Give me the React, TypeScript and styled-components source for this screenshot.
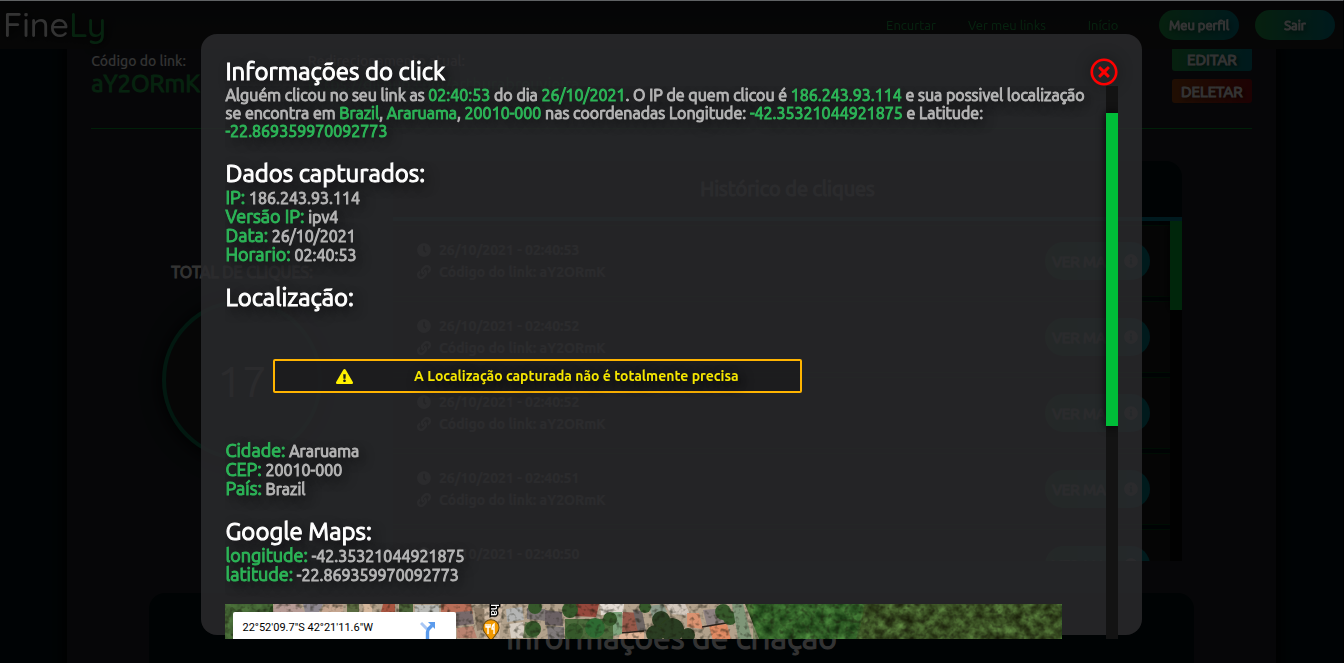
import React from "react";
import styled, { createGlobalStyle, css } from "styled-components";
import {
  FaClock,
  FaLink,
  FaInfoCircle,
  FaExclamationTriangle,
  FaRegTimesCircle,
} from "react-icons/fa";

const GlobalStyle = createGlobalStyle`
  * { box-sizing: border-box; margin: 0; padding: 0; }
  body {
    background: #000;
    color: #fff;
    font-family: Ubuntu, Lato, "Noto Sans", sans-serif;
    font-size: 16px;
  }
  button { font-family: inherit; border: 0; cursor: pointer; }
  a { text-decoration: none; }
`;

const brandGradient = "linear-gradient(90deg, #22a04a, #00808f)";

const strongText = css`
  font-weight: 400;
  -webkit-text-stroke: 1px currentColor;
`;

const Page = styled.div`
  height: 100vh;
  padding-right: 1px;
  overflow: hidden;
  background: #00121a;
`;

/* ---------- top bar ---------- */

const TopBar = styled.header`
  position: sticky;
  top: 0;
  z-index: 1;
  display: flex;
  align-items: center;
  justify-content: space-between;
  height: 49px;
  padding: 0 8px 0 3px;
  background: linear-gradient(#191b1e, #222);
`;

const Logo = styled.a`
  font-family: Quicksand, Comfortaa, Lato, sans-serif;
  font-size: 34px;
  font-weight: 500;
  line-height: 44px;
  color: #fff;
  text-shadow: 2px 2px 8px #000;
`;

const LogoAccent = styled.span`
  color: #22b14c;
`;

const Nav = styled.nav`
  display: flex;
  align-items: center;
  gap: 16px;
`;

const NavLink = styled.a`
  width: 80px;
  font-size: 13px;
  line-height: 18px;
  text-align: center;
  white-space: nowrap;
  color: #1fb04c;
`;

const NavButton = styled.button`
  ${strongText}
  width: 80px;
  height: 30px;
  border-radius: 15px;
  font-size: 13px;
  color: #fff;
  background: ${brandGradient};
  text-shadow: 2px 2px 6px #000;
`;

/* ---------- page content ---------- */

const Main = styled.main`
  width: 90%;
  margin: -2px auto 0;
  padding: 0 24px;
  min-height: 100vh;
  background: #1e2228;
  box-shadow: 0 0 12px 4px #000;
`;

const LinkHeader = styled.section`
  display: flex;
  gap: 108px;
  height: 82px;
  border-bottom: 1px solid #00a030;
`;

const LinkField = styled.div`
  padding-top: 5px;
  font-size: 14px;
  font-weight: 500;
  line-height: 18px;
  white-space: nowrap;
`;

const LinkCode = styled.p`
  ${strongText}
  font-size: 24px;
  line-height: 28px;
  color: #1fb04c;
`;

const LinkTarget = styled.a`
  display: block;
  font-size: 16px;
  line-height: 28px;
  color: #1fb04c;
`;

const LinkActions = styled.div`
  display: flex;
  flex-direction: column;
  gap: 8px;
  margin-left: auto;
`;

const ActionButton = styled.button<{ $danger?: boolean }>`
  ${strongText}
  width: 80px;
  height: 24px;
  border-radius: 3px;
  font-size: 15px;
  color: #fff;
  background: ${(p) => (p.$danger ? "linear-gradient(90deg, #a04a12, #960a10)" : brandGradient)};
  text-shadow: 2px 2px 4px #000;
`;

const Stats = styled.section`
  display: flex;
  margin-top: 32px;
`;

const Total = styled.div`
  display: flex;
  flex-direction: column;
  align-items: center;
  justify-content: center;
  gap: 18px;
  width: 26%;
`;

const TotalLabel = styled.h3`
  ${strongText}
  font-size: 16px;
  line-height: 20px;
`;

const TotalCircle = styled.div`
  display: flex;
  align-items: center;
  justify-content: center;
  width: 160px;
  height: 160px;
  border: 4px solid #0a7850;
  border-radius: 50%;
  background: #1f2022;
  box-shadow: 0 2px 20px #000;
  font-size: 44px;
`;

const History = styled.div`
  width: 68%;
  border-radius: 16px 16px 0 0;
  background: #000f14;
`;

const HistoryTitle = styled.h2`
  ${strongText}
  height: 56px;
  font-size: 20px;
  line-height: 56px;
  text-align: center;
`;

const HistoryBody = styled.div`
  display: flex;
  height: 344px;
  overflow: hidden;
  border-top: 4px solid #00829b;
`;

const HistoryList = styled.ul`
  flex: 1;
  display: flex;
  flex-direction: column;
  gap: 4px;
  padding-top: 4px;
  list-style: none;
`;

const HistoryItem = styled.li`
  display: flex;
  flex: none;
  align-items: center;
  justify-content: space-between;
  height: 72px;
  padding: 0 20px 0 24px;
  border: solid #004016;
  border-width: 1px 0;
  background: #1c1c1c;
`;

const HistoryLine = styled.p`
  display: flex;
  align-items: center;
  gap: 8px;
  font-size: 14px;
  font-weight: 700;
  line-height: 22px;
`;

const MoreButton = styled.button`
  ${strongText}
  display: flex;
  align-items: center;
  justify-content: space-between;
  width: 105px;
  height: 38px;
  padding: 0 12px 0 7px;
  border-radius: 19px;
  font-size: 15px;
  color: #fff;
  background: ${brandGradient};
  white-space: nowrap;
`;

const Track = styled.div<{ $top?: number; $color: string }>`
  flex: none;
  width: 12px;
  padding-top: ${(p) => p.$top ?? 0}px;
  background: ${(p) => p.$color};
`;

const Thumb = styled.div<{ $size: string }>`
  height: ${(p) => p.$size};
  background: #00bd38;
  box-shadow: 0 0 10px #000;
`;

const CreationInfo = styled.section`
  width: 90%;
  height: 320px;
  margin: 32px auto 0;
  padding-top: 24px;
  border-radius: 16px;
  background: #000f14;
  text-align: center;
`;

const CreationTitle = styled.h2`
  ${strongText}
  font-size: 32px;
  line-height: 40px;
`;

/* ---------- modal ---------- */

const Overlay = styled.div`
  position: fixed;
  inset: 0;
  z-index: 2;
  display: flex;
  align-items: flex-start;
  justify-content: center;
  padding-top: 33px;
  border-top: 1px solid #606264;
  border-right: 1px solid #000;
  background: rgba(0, 0, 0, 0.8);
`;

const Dialog = styled.div`
  display: flex;
  flex-direction: column;
  width: 70%;
  height: calc(100vh - 62px);
  padding: 0 24px;
  border-radius: 16px;
  background: rgba(42, 42, 44, 0.86);
`;

const DialogHeader = styled.header`
  display: flex;
  flex: none;
  align-items: flex-end;
  justify-content: space-between;
  height: 52px;
`;

const Heading = styled.h2`
  ${strongText}
  font-size: 24px;
  line-height: 28px;
  color: #fff;
  text-shadow: 4px 4px 12px #000;
`;

const CloseButton = styled.button`
  display: flex;
  border-radius: 50%;
  color: #f00;
  background: none;
  font-size: 28px;
  box-shadow: 0 0 16px rgba(0, 0, 0, 0.3);
`;

const DialogBody = styled.div`
  display: flex;
  flex: none;
  height: calc(100vh - 110px);
  overflow: hidden;
`;

const DialogContent = styled.div`
  flex: 1;
  overflow: hidden;
  color: #b4b4b4;
  text-shadow: 4px 4px 12px #000;
`;

const Summary = styled.p`
  ${strongText}
  padding-right: 8px;
  line-height: 18px;
`;

const Mark = styled.span`
  color: #2cb457;
  -webkit-text-stroke-color: #2cb457;
`;

const Group = styled.section`
  margin-top: 20px;
`;

const Field = styled.p`
  ${strongText}
  font-size: 18px;
  line-height: 19px;
  color: #2cb457;
`;

const FieldValue = styled.span`
  font-size: 16px;
  line-height: 16px;
  color: #b4b4b4;
  -webkit-text-stroke-color: #b4b4b4;
`;

const Notice = styled.div`
  display: flex;
  align-items: center;
  justify-content: space-evenly;
  width: 60%;
  height: 34px;
  margin: 47px 48px 48px;
  border: 2px solid #ffb400;
  border-radius: 2px;
  background: rgba(20, 20, 22, 0.5);
  font-size: 14px;
  font-weight: 700;
  color: #f5e600;
`;

const NoticeIcon = styled(FaExclamationTriangle)`
  font-size: 17px;
  color: #fff000;
`;

const MapFrame = styled.div`
  position: relative;
  width: 95%;
  height: 400px;
  margin-top: 20px;
  overflow: hidden;
  background: #34521f;
  text-shadow: none;
`;

const MapCard = styled.div`
  position: absolute;
  top: 8px;
  left: 8px;
  display: flex;
  align-items: flex-start;
  justify-content: space-between;
  width: 223px;
  height: 90px;
  padding: 9px 20px 0 9px;
  border-radius: 2px;
  background: #fff;
  color: #000;
  font-family: Roboto, sans-serif;
  font-size: 11px;
  line-height: 13px;
`;

const Satellite = () => (
  <svg width="100%" height="400" viewBox="0 0 836 400" preserveAspectRatio="xMinYMin slice" aria-hidden="true">
    <defs>
      <filter id="leaves" x="0" y="0" width="100%" height="100%" colorInterpolationFilters="sRGB">
        <feTurbulence type="fractalNoise" baseFrequency="0.1" numOctaves="3" seed="7" />
        <feColorMatrix values="0.5 0 0 0 -0.04  0.75 0 0 0 -0.02  0.4 0 0 0 -0.05  0 0 0 0 1" />
      </filter>
      <filter id="grain" x="0" y="0" width="100%" height="100%" colorInterpolationFilters="sRGB">
        <feTurbulence type="fractalNoise" baseFrequency="0.2" numOctaves="2" seed="3" />
        <feColorMatrix values="0 0 0 0 0.1  0 0 0 0 0.1  0 0 0 0 0.05  0 1.6 0 0 -0.78" />
      </filter>
      <filter id="soft">
        <feGaussianBlur stdDeviation="0.7" />
      </filter>
    </defs>
    <rect width="836" height="400" filter="url(#leaves)" />
    <g filter="url(#soft)">
      <path d="M48 0H520L536 40V80H231V8H48z" fill="#b3a28c" />
      <path d="M50 0h22l8 8H48z" fill="#b59a94" />
      <path d="M78 0h20l-4 8H80z" fill="#8e8890" />
      <path d="M100 0h18v8h-22z" fill="#c5a690" />
      <path d="M122 0h12v8h-12z" fill="#5a6a40" />
      <path d="M138 0h9v8h-9z" fill="#d4b79c" />
      <path d="M158 0h12v8h-14z" fill="#a85440" />
      <path d="M174 0h14v8h-14z" fill="#4b6338" />
      <path d="M190 1h24v7h-24z" fill="#b9bab6" />
      <path d="M216 0h30l2 10h-32z" fill="#b86e58" />
      <path d="M231 8l16-1 2 13-18 2z" fill="#77696a" />
      <path d="M232 24l16-2 4 12h-20z" fill="#b98370" />
      <path d="M249 3l10 2 1 20-8 2z" fill="#8c7a66" />
      <path d="M260 0h18l-4 36h-15z" fill="#cdb8a3" />
      <path d="M281 5l16-2 2 13-17 2z" fill="#b4b5b4" />
      <path d="M284 20l14-2 3 16h-15z" fill="#d6cdc2" />
      <path d="M302 4l18 1 2 12-20-2z" fill="#7d7675" />
      <path d="M300 18l14 2-2 14h-14z" fill="#6e7f58" />
      <path d="M320 6l17 2 1 14-18-1z" fill="#6a6163" />
      <path d="M322 22l17 1v13l-16-1z" fill="#807a7a" />
      <path d="M350 0h24l-3 13-22-1z" fill="#94473a" />
      <path d="M375 0h24l-1 9-22 2z" fill="#e2dad2" />
      <path d="M340 15h48v25h-48z" fill="#4c6a3a" />
      <path d="M398 8l19 1 2 18-22 2z" fill="#96584a" />
      <path d="M408 6l9 1 4 20-8 1z" fill="#6d6563" />
      <path d="M395 28l24-1v12h-26z" fill="#dfb497" />
      <path d="M424 2l14-2 4 8-14 8z" fill="#8a9a8a" />
      <path d="M440 0h20l6 12-20-2z" fill="#d2c7bc" />
      <path d="M462 9l12 0 4 16-16-2z" fill="#da9270" />
      <path d="M478 6l22-2 4 14-22 4z" fill="#8d8180" />
      <path d="M484 22l18-2 4 16-18 1z" fill="#e08a64" />
      <path d="M395 29l24-2M477 23l24-4" stroke="#2c201c" strokeWidth="1.4" />
      <path d="M388 8l9 0v22l-9 2z" fill="#7da37c" />
      <g fill="#35592c">
        <circle cx="310" cy="3" r="7" />
        <circle cx="345" cy="6" r="8" />
        <circle cx="349" cy="28" r="9" />
        <circle cx="308" cy="25" r="8" />
        <circle cx="385" cy="15" r="7" />
        <circle cx="420" cy="3" r="6" />
        <circle cx="498" cy="8" r="8" />
        <circle cx="505" cy="14" r="7" />
      </g>
      <circle cx="370" cy="24" r="10" fill="#2f6a30" />
      <g fill="#2c3d20">
        <circle cx="436" cy="16" r="9" />
        <circle cx="447" cy="26" r="12" />
        <circle cx="430" cy="30" r="9" />
        <circle cx="463" cy="31" r="7" />
      </g>
      <path d="M507 0h11l10 40h-14z" fill="#7f9678" />
      <path d="M0 0h46l-10 40H0z" fill="#4c6a3c" fillOpacity="0.6" />
      <path d="M528 0h110l-80 400h-30z" fill="#2f6a2c" fillOpacity="0.35" />
      <path d="M640 0h196v400H560z" fill="#4a3a1c" fillOpacity="0.25" />
    </g>
    <rect width="836" height="400" filter="url(#grain)" />
    <path d="M266 37l-6-8a8 8 0 1 1 12 0z" fill="#f29900" stroke="#6b4a12" strokeWidth="1" />
    <path d="M263 20v3M261 20v3h4v-3M263 23v7M269 30v-10q-2 1-2 5h2" fill="none" stroke="#fff" strokeWidth="1.4" />
    <text
      x="-6"
      y="0"
      transform="translate(266 6) rotate(90)"
      fontFamily="Roboto, sans-serif"
      fontSize="11"
      fontWeight="500"
      fill="#fff"
      stroke="#000"
      strokeWidth="3"
      paintOrder="stroke"
    >
      ha
    </text>
  </svg>
);

const DirectionsIcon = () => (
  <svg width="16" height="18" viewBox="0 0 16 18" aria-hidden="true">
    <path d="M1 2l6 6" stroke="#a9c7f5" strokeWidth="3" />
    <path d="M7.500 18v-7q0-2 1.500-3.500L12 4.500" fill="none" stroke="#5b9bec" strokeWidth="3.400" />
    <path d="M8 1h7v7z" fill="#5b9bec" />
  </svg>
);

const clicks = [
  "26/10/2021 - 02:40:53",
  "26/10/2021 - 02:40:52",
  "26/10/2021 - 02:40:52",
  "26/10/2021 - 02:40:51",
  "26/10/2021 - 02:40:50",
];

const captured = [
  ["IP:", "186.243.93.114"],
  ["Versão IP:", "ipv4"],
  ["Data:", "26/10/2021"],
  ["Horario:", "02:40:53"],
];

const place = [
  ["Cidade:", "Araruama"],
  ["CEP:", "20010-000"],
  ["País:", "Brazil"],
];

const coordinates = [
  ["longitude:", "-42.35321044921875"],
  ["latitude:", "-22.869359970092773"],
];

const Fields = ({ rows }: { rows: string[][] }) => (
  <>
    {rows.map(([name, value]) => (
      <Field key={name}>
        {name}
        <FieldValue> {value}</FieldValue>
      </Field>
    ))}
  </>
);

export default function App() {
  return (
    <>
      <GlobalStyle />
      <Page>
        <TopBar>
          <Logo href="#">
            Fine<LogoAccent>Ly</LogoAccent>
          </Logo>
          <Nav>
            <NavLink href="#encurtar">Encurtar</NavLink>
            <NavLink href="#links">Ver meu links</NavLink>
            <NavLink href="#inicio">Início</NavLink>
            <NavButton>Meu perfil</NavButton>
            <NavButton>Sair</NavButton>
          </Nav>
        </TopBar>
        <Main>
          <LinkHeader>
            <LinkField>
              <p>Código do link:</p>
              <LinkCode>aY2ORmK</LinkCode>
            </LinkField>
            <LinkField>
              <p>Redirecionamento atual:</p>
              <LinkTarget href="#destino">https://github.com/arthurabreuvieira</LinkTarget>
            </LinkField>
            <LinkActions>
              <ActionButton>EDITAR</ActionButton>
              <ActionButton $danger>DELETAR</ActionButton>
            </LinkActions>
          </LinkHeader>
          <Stats>
            <Total>
              <TotalLabel>TOTAL DE CLIQUES:</TotalLabel>
              <TotalCircle>17</TotalCircle>
            </Total>
            <History>
              <HistoryTitle>Histórico de cliques</HistoryTitle>
              <HistoryBody>
                <HistoryList>
                  {clicks.map((when, i) => (
                    <HistoryItem key={i}>
                      <div>
                        <HistoryLine>
                          <FaClock /> {when}
                        </HistoryLine>
                        <HistoryLine>
                          <FaLink /> Código do link: aY2ORmK
                        </HistoryLine>
                      </div>
                      <MoreButton>
                        VER MAIS <FaInfoCircle size={14} />
                      </MoreButton>
                    </HistoryItem>
                  ))}
                </HistoryList>
                <Track $color="#080808">
                  <Thumb $size="89px" />
                </Track>
              </HistoryBody>
            </History>
          </Stats>
          <CreationInfo>
            <CreationTitle>Informações de criação</CreationTitle>
          </CreationInfo>
        </Main>
      </Page>
      <Overlay>
        <Dialog role="dialog" aria-labelledby="click-title">
          <DialogHeader>
            <Heading id="click-title">Informações do click</Heading>
            <CloseButton aria-label="Fechar">
              <FaRegTimesCircle />
            </CloseButton>
          </DialogHeader>
          <DialogBody>
            <DialogContent>
              <Summary>
                Alguém clicou no seu link as <Mark>02:40:53</Mark> do dia <Mark>26/10/2021</Mark>. O IP de quem clicou
                é <Mark>186.243.93.114</Mark> e sua possivel localização se encontra em <Mark>Brazil</Mark>,{" "}
                <Mark>Araruama</Mark>, <Mark>20010-000</Mark> nas coordenadas Longitude:{" "}
                <Mark>-42.35321044921875</Mark> e Latitude: <Mark>-22.869359970092773</Mark>
              </Summary>
              <Group>
                <Heading>Dados capturados:</Heading>
                <Fields rows={captured} />
              </Group>
              <Group>
                <Heading>Localização:</Heading>
                <Notice>
                  <NoticeIcon />
                  <span>A Localização capturada não é totalmente precisa</span>
                </Notice>
                <Fields rows={place} />
              </Group>
              <Group>
                <Heading>Google Maps:</Heading>
                <Fields rows={coordinates} />
              </Group>
              <MapFrame>
                <Satellite />
                <MapCard>
                  <span>22°52'09.7"S 42°21'11.6"W</span>
                  <DirectionsIcon />
                </MapCard>
              </MapFrame>
            </DialogContent>
            <Track $top={27} $color="#131313">
              <Thumb $size="313px" />
            </Track>
          </DialogBody>
        </Dialog>
      </Overlay>
    </>
  );
}
